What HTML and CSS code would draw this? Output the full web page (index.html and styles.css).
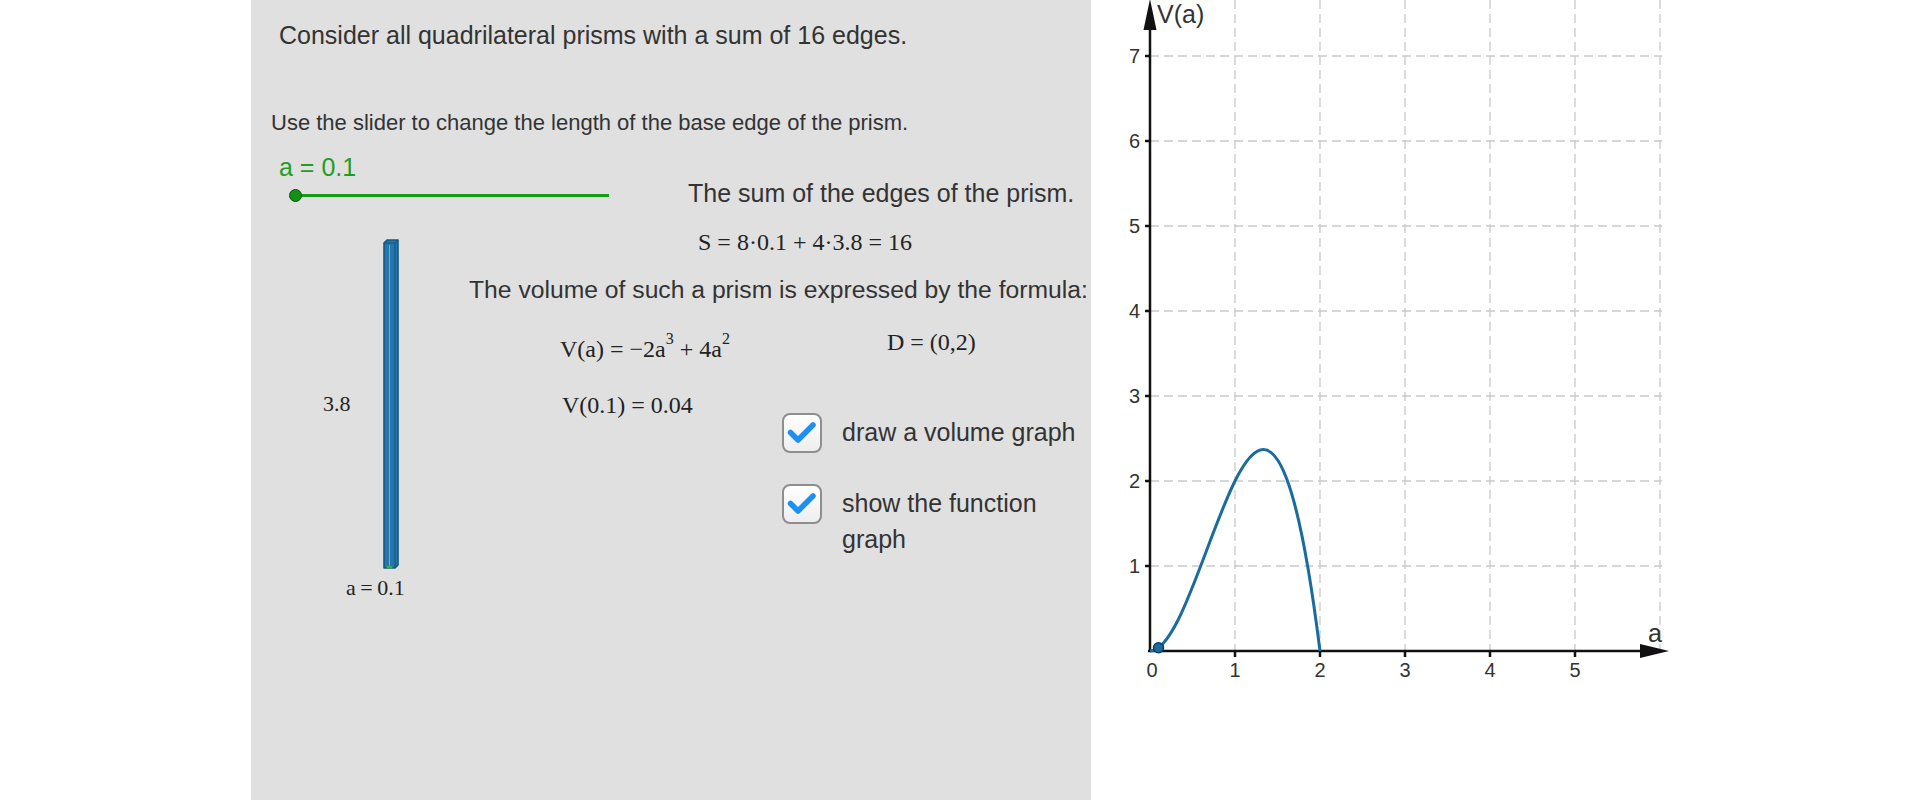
FILE: index.html
```html
<!DOCTYPE html>
<html>
<head>
<meta charset="utf-8">
<title>Quadrilateral prisms</title>
<link rel="stylesheet" href="styles.css">
</head>
<body>
<div class="page">
  <div class="panel">
    <p class="title">Consider all quadrilateral prisms with a sum of 16 edges.</p>
    <p class="hint">Use the slider to change the length of the base edge of the prism.</p>
    <p class="slider-label">a = 0.1</p>
    <div class="slider-row">
      <div class="slider"><span class="knob"></span><span class="track"></span></div>
      <p class="sum-title">The sum of the edges of the prism.</p>
    </div>
    <div class="work">
      <div class="prism-col">
        <div class="prism-row">
          <span class="m height-label">3.8</span>
          <svg class="prism" viewBox="0 0 16 330" width="16" height="330">
            <path d="M1 4 L4 1 L15 1 L15 326 L12 329 L1 329 Z" fill="#2676ab" stroke="#135985" stroke-width="1.6" stroke-linejoin="round"/>
            <path d="M1 4 L12 4 L15 1 M12 4 L12 329" fill="none" stroke="#135985" stroke-width="1.2"/>
            <path d="M6.5 6 L6.5 327" stroke="#6ea9d3" stroke-width="1"/>
            <ellipse cx="6.5" cy="328" rx="3" ry="1.6" fill="#33b233"/>
          </svg>
        </div>
        <span class="m base-label">a = 0.1</span>
      </div>
      <div class="text-col">
        <p class="m sum-eq">S = 8·0.1 + 4·3.8 = 16</p>
        <p class="volume-title">The volume of such a prism is expressed by the formula:</p>
        <div class="formula-row">
          <span class="m va">V(a) = −2a<sup>3</sup> + 4a<sup>2</sup></span>
          <span class="m">D = (0,2)</span>
        </div>
        <div class="value-row">
          <span class="m">V(0.1) = 0.04</span>
          <div class="checks">
            <div class="check">
              <span class="box"><svg viewBox="0 0 36 36" width="36" height="36"><path d="M6.5 17.5 L14 25 L29 10" fill="none" stroke="#1e8ff5" stroke-width="5.5" stroke-linecap="round" stroke-linejoin="round"/></svg></span>
              <span class="check-text">draw a volume graph</span>
            </div>
            <div class="check">
              <span class="box"><svg viewBox="0 0 36 36" width="36" height="36"><path d="M6.5 17.5 L14 25 L29 10" fill="none" stroke="#1e8ff5" stroke-width="5.5" stroke-linecap="round" stroke-linejoin="round"/></svg></span>
              <span class="check-text">show the function graph</span>
            </div>
          </div>
        </div>
      </div>
    </div>
  </div>
  <svg class="graph" viewBox="1091 0 829 800" width="829" height="800">
    <g class="grid" stroke="#c9c9c9" stroke-width="1.3" stroke-dasharray="9 5" fill="none">
      <path d="M1235 0 V651 M1320 0 V651 M1405 0 V651 M1490 0 V651 M1575 0 V651 M1660 0 V651"/>
      <path d="M1150 566 H1662 M1150 481 H1662 M1150 396 H1662 M1150 311 H1662 M1150 226 H1662 M1150 141 H1662 M1150 56 H1662"/>
    </g>
    <g stroke="#111" stroke-width="2.5" fill="none">
      <path d="M1150 652 V26"/>
      <path d="M1148 651 H1642"/>
      <path d="M1145 566 H1150 M1145 481 H1150 M1145 396 H1150 M1145 311 H1150 M1145 226 H1150 M1145 141 H1150 M1145 56 H1150"/>
      <path d="M1235 651 V657 M1320 651 V657 M1405 651 V657 M1490 651 V657 M1575 651 V657"/>
    </g>
    <polygon points="1150,-1 1143.5,30 1156.5,30" fill="#111"/>
    <polygon points="1669,651 1640,644 1640,658" fill="#111"/>
    <g class="ticks" font-size="20" fill="#333" text-anchor="end">
      <text x="1140" y="573">1</text>
      <text x="1140" y="488">2</text>
      <text x="1140" y="403">3</text>
      <text x="1140" y="318">4</text>
      <text x="1140" y="233">5</text>
      <text x="1140" y="148">6</text>
      <text x="1140" y="63">7</text>
    </g>
    <g class="ticks" font-size="20" fill="#333" text-anchor="middle">
      <text x="1152" y="677">0</text>
      <text x="1235" y="677">1</text>
      <text x="1320" y="677">2</text>
      <text x="1405" y="677">3</text>
      <text x="1490" y="677">4</text>
      <text x="1575" y="677">5</text>
    </g>
    <text class="axis-label" x="1157" y="23">V(a)</text>
    <text class="axis-label" x="1648" y="642">a</text>
    <path d="M1150 651 C1206.67 651 1263.33 197.67 1320 651" fill="none" stroke="#1a6c9f" stroke-width="3"/>
    <circle cx="1158.5" cy="647.8" r="5" fill="#1a6c9f" stroke="#0d3f5f" stroke-width="1.5"/>
  </svg>
</div>
</body>
</html>
```
FILE: styles.css
```css
* {
  box-sizing: border-box;
}

html,
body {
  margin: 0;
  padding: 0;
  background: #ffffff;
}

body {
  font-family: "Liberation Sans", Arial, sans-serif;
  color: #333333;
}

p {
  margin: 0;
}

.page {
  display: flex;
  width: 1920px;
  height: 800px;
  overflow: hidden;
}

.panel {
  flex: none;
  margin-left: 251px;
  width: 840px;
  height: 800px;
  background: #e0e0e0;
  overflow: hidden;
}

.title {
  margin: 21px 0 0 28px;
  font-size: 25px;
  line-height: 29px;
  white-space: nowrap;
}

.hint {
  margin: 60px 0 0 20px;
  font-size: 22px;
  line-height: 25px;
  white-space: nowrap;
}

.slider-label {
  margin: 20px 0 0 28px;
  font-size: 25px;
  line-height: 24px;
  color: #1f9e1f;
}

.slider-row {
  display: flex;
  height: 30px;
}

.slider {
  display: flex;
  align-items: center;
  margin: 10px 0 0 38px;
  width: 320px;
  height: 12px;
}

.knob {
  position: relative;
  z-index: 1;
  flex: none;
  width: 13px;
  height: 13px;
  border-radius: 50%;
  background: #129112;
  border: 1.5px solid #0a4f0a;
}

.track {
  flex: 1;
  height: 3px;
  margin-left: -6px;
  background: #179a17;
}

.sum-title {
  margin: 2px 0 0 79px;
  font-size: 25px;
  line-height: 24px;
  white-space: nowrap;
}

.work {
  display: flex;
}

.prism-col {
  flex: none;
  width: 218px;
}

.prism-row {
  display: flex;
  align-items: center;
  margin-top: 30px;
}

.m {
  font-family: "Liberation Serif", "Times New Roman", serif;
  color: #222222;
}

.height-label {
  flex: none;
  margin-left: 72px;
  width: 60px;
  font-size: 22px;
  line-height: 26px;
}

.prism {
  display: block;
  flex: none;
  width: 16px;
  height: 330px;
}

.base-label {
  display: block;
  margin: 6px 0 0 95px;
  font-size: 22px;
  line-height: 26px;
  word-spacing: -1px;
}

.text-col {
  flex: 1;
  min-width: 0;
}

.sum-eq {
  margin: 19px 0 0 229px;
  font-size: 24px;
  line-height: 28px;
  white-space: nowrap;
}

.volume-title {
  margin-top: 19px;
  font-size: 24.7px;
  line-height: 29px;
  white-space: nowrap;
}

.formula-row {
  display: grid;
  grid-template-columns: 327px auto;
  align-items: start;
  margin-top: 24px;
  padding-left: 91px;
  font-size: 24px;
  line-height: 28px;
  white-space: nowrap;
}

.formula-row .va {
  margin-top: 7px;
}

sup {
  font-size: 16px;
  line-height: 0;
  vertical-align: 13px;
}

.value-row {
  display: grid;
  grid-template-columns: 220px auto;
  align-items: start;
  margin-top: 28px;
  padding-left: 93px;
  font-size: 24px;
  line-height: 28px;
  white-space: nowrap;
}

.checks {
  display: flex;
  flex-direction: column;
  gap: 31px;
  margin-top: 22px;
}

.check {
  display: flex;
  align-items: flex-start;
  gap: 20px;
}

.box {
  flex: none;
  display: block;
  width: 40px;
  height: 40px;
  border: 2px solid #8e8e8e;
  border-radius: 8px;
  background: linear-gradient(#ffffff, #eeeeee);
}

.box svg {
  display: block;
}

.check-text {
  margin-top: 1px;
  width: 240px;
  font-size: 25px;
  line-height: 36px;
  color: #333333;
  white-space: normal;
}

.graph {
  display: block;
  flex: none;
  width: 829px;
  height: 800px;
  font-family: "Liberation Sans", Arial, sans-serif;
}

.axis-label {
  font-size: 25px;
  fill: #333333;
}
```
